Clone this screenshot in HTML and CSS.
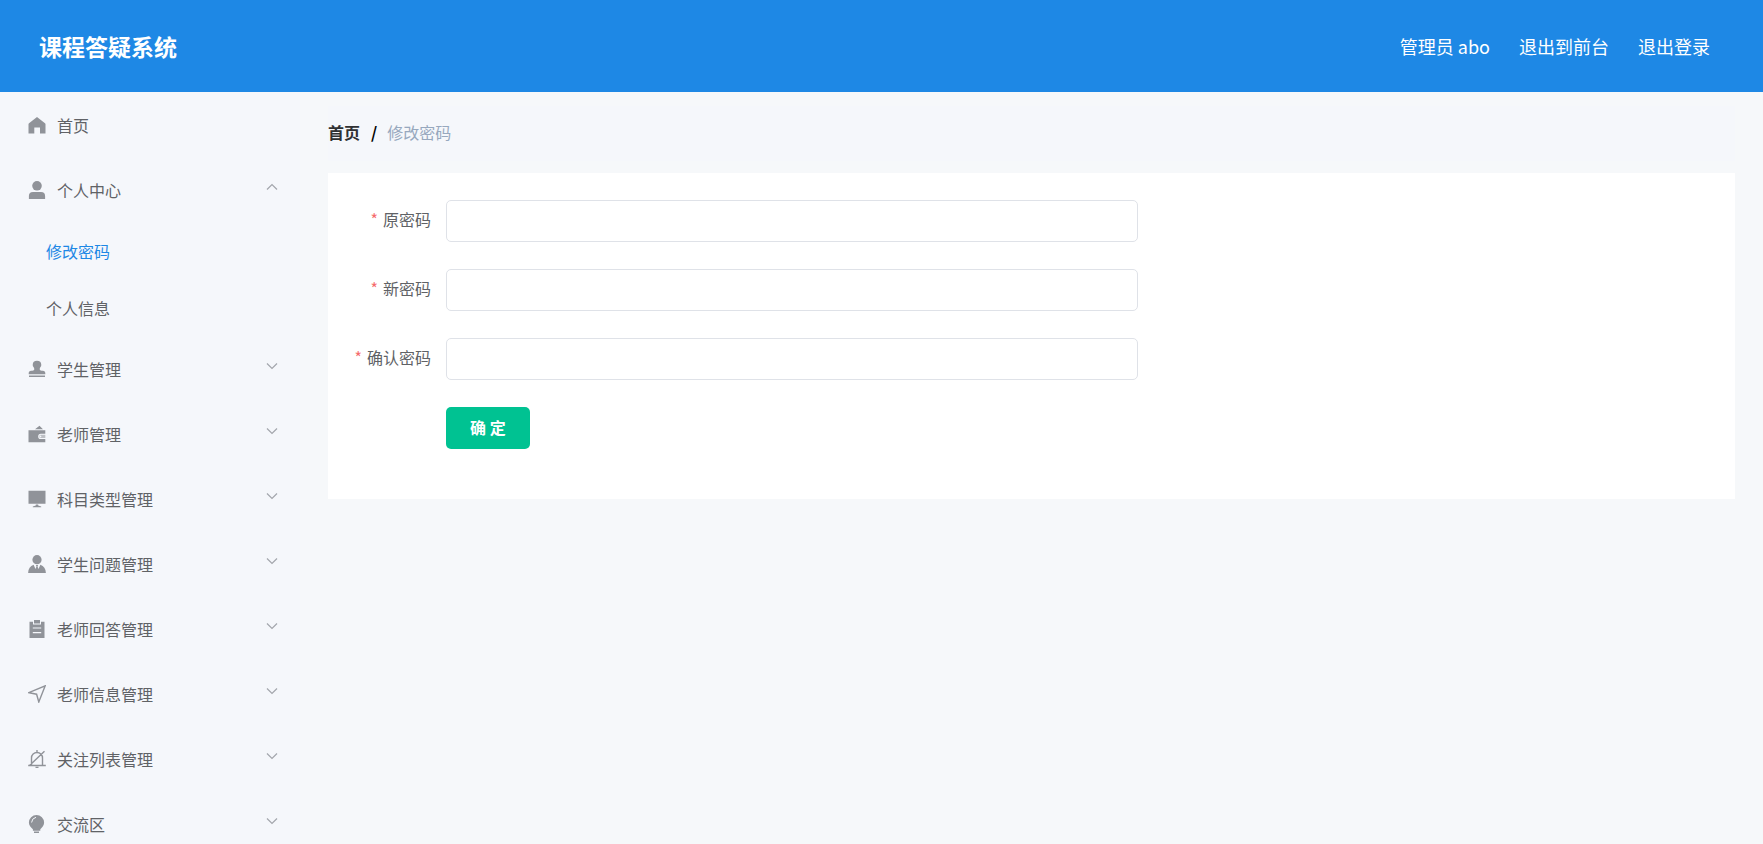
FILE: index.html
```html
<!DOCTYPE html>
<html lang="zh-CN">
<head>
    <meta charset="UTF-8">
    <meta name="viewport" content="width=device-width, initial-scale=1.0">
    <title>课程答疑系统</title>
    <link rel="stylesheet" href="styles.css">
</head>
<body>
    <!-- 下拉箭头 -->
    <svg class="symbols" aria-hidden="true">
        <symbol id="arrow" viewBox="0 0 12 12">
            <path d="M1 3.500 6 8.500 11 3.500" fill="none" stroke="currentColor" stroke-width="1.200"/>
        </symbol>
    </svg>

    <header class="header">
        <h1 class="title">课程答疑系统</h1>
        <nav class="header-nav">
            <span>管理员 abo</span>
            <a href="#">退出到前台</a>
            <a href="#">退出登录</a>
        </nav>
    </header>

    <div class="container">
        <aside class="sidebar">
            <a class="menu-item" href="#">
                <svg class="icon" viewBox="0 0 18 18"><path d="M9 1 17 7.200q.5.4.5 1V17.500H12v-6H6.300v6H.5V8.200q0-.6.500-1z"/></svg>
                <span>首页</span>
            </a>

            <details class="submenu" open>
                <summary class="menu-item">
                    <svg class="icon" viewBox="0 0 18 18"><circle cx="9" cy="4.800" r="4.800"/><path d="M.9 17.900v-3Q.9 10.900 5 10.900h8q4.100 0 4.100 4v3z"/></svg>
                    <span>个人中心</span>
                    <svg class="arrow"><use href="#arrow"/></svg>
                </summary>
                <a class="sub-item active" href="#">修改密码</a>
                <a class="sub-item" href="#">个人信息</a>
            </details>

            <details class="submenu">
                <summary class="menu-item">
                    <svg class="icon" viewBox="0 0 18 18"><path d="M9 .8a4.300 4.300 0 0 1 4.300 4.200c0 1.700-1.600 2.500-1.600 4 0 1.200.7 1.700 2 1.700h1.200q2.400 0 2.400 2.600v1H.7v-1q0-2.600 2.400-2.600h1.200c1.300 0 2-.5 2-1.700 0-1.500-1.600-2.300-1.600-4A4.300 4.300 0 0 1 9 .8zM1 15.500h16V17H1z"/></svg>
                    <span>学生管理</span>
                    <svg class="arrow"><use href="#arrow"/></svg>
                </summary>
            </details>

            <details class="submenu">
                <summary class="menu-item">
                    <svg class="icon" viewBox="0 0 18 18"><path d="M7 4.200 11.500.8 15 4.200zM.5 5.200H17.300v3.600h-4.500a2.600 2.600 0 0 0 0 5.200h4.500v3.300H.5z"/><path d="M12.800 9.800h4.500V13h-4.500a1.600 1.600 0 0 1 0-3.200zm0 .9a.8.800 0 1 0 0 1.500.8.800 0 0 0 0-1.500z" fill-rule="evenodd" opacity=".55"/></svg>
                    <span>老师管理</span>
                    <svg class="arrow"><use href="#arrow"/></svg>
                </summary>
            </details>

            <details class="submenu">
                <summary class="menu-item">
                    <svg class="icon" viewBox="0 0 18 18"><path d="M.5.8H17.500v13H.5zM7.800 14.500h2.400v1.100l3 1v.6H4.800v-.6l3-1z"/></svg>
                    <span>科目类型管理</span>
                    <svg class="arrow"><use href="#arrow"/></svg>
                </summary>
            </details>

            <details class="submenu">
                <summary class="menu-item">
                    <svg class="icon" viewBox="0 0 18 18"><circle cx="9" cy="4.700" r="4.600"/><path d="M5.600 9.800 7.500 14l1-2.500-.6-1.500h2.200l-.6 1.500 1 2.500 1.900-4.200q5.200 1.700 5.500 8.200H.1Q.4 11.500 5.600 9.800z"/></svg>
                    <span>学生问题管理</span>
                    <svg class="arrow"><use href="#arrow"/></svg>
                </summary>
            </details>

            <details class="submenu">
                <summary class="menu-item">
                    <svg class="icon" viewBox="0 0 18 18"><path d="M6 0h6v3.500H6z"/><path fill-rule="evenodd" d="M1.500 1.800H5v2.700h8V1.800h3.500V18h-15zM4.800 7.500v1.100h8.400V7.500zm0 4.600v1.100h8.400v-1.100z"/></svg>
                    <span>老师回答管理</span>
                    <svg class="arrow"><use href="#arrow"/></svg>
                </summary>
            </details>

            <details class="submenu">
                <summary class="menu-item">
                    <svg class="icon line" viewBox="0 0 18 18"><path d="M17.200.8 10.800 17 8.600 9.200.8 7.600z"/></svg>
                    <span>老师信息管理</span>
                    <svg class="arrow"><use href="#arrow"/></svg>
                </summary>
            </details>

            <details class="submenu">
                <summary class="menu-item">
                    <svg class="icon line" viewBox="0 0 18 18"><path d="M9 0v2M.2 15.500h17.600M3.500 15.500V8a5.500 5.500 0 0 1 11 0v7.500M7.500 17.400h3M16.500 1.200 1.500 15.500"/></svg>
                    <span>关注列表管理</span>
                    <svg class="arrow"><use href="#arrow"/></svg>
                </summary>
            </details>

            <details class="submenu">
                <summary class="menu-item">
                    <svg class="icon" viewBox="0 0 18 18"><path d="M8.500 0a7.600 7.600 0 0 1 7.600 7.600c0 3-1.800 4.700-3.800 6.700v1.400H4.900v-1.400C2.800 12.300.9 10.600.9 7.600A7.600 7.600 0 0 1 8.500 0zM6 16.400h5v1.600H6z"/><path class="shine" d="M3.600 7.500Q3.800 3.300 8 2.300"/></svg>
                    <span>交流区</span>
                    <svg class="arrow"><use href="#arrow"/></svg>
                </summary>
            </details>
        </aside>

        <main class="main">
            <nav class="breadcrumb">
                <a href="#">首页</a>
                <span class="separator">/</span>
                <span class="current">修改密码</span>
            </nav>

            <div class="panel">
                <form class="form" action="#">
                    <div class="form-item">
                        <label for="oldPassword">原密码</label>
                        <input type="password" id="oldPassword" required>
                    </div>
                    <div class="form-item">
                        <label for="newPassword">新密码</label>
                        <input type="password" id="newPassword" required>
                    </div>
                    <div class="form-item">
                        <label for="rePassword">确认密码</label>
                        <input type="password" id="rePassword" required>
                    </div>
                    <div class="form-btns">
                        <button type="submit">确 定</button>
                    </div>
                </form>
            </div>
        </main>
    </div>
</body>
</html>
```

FILE: styles.css
```css
*{
    padding: 0;
    margin: 0;
    box-sizing: border-box;
}
body{
    height: 100vh;
    display: flex;
    flex-direction: column;
    overflow: hidden;
    background-color: #f6f8fa;
    font-family: "Noto Sans CJK SC", sans-serif;
    font-size: 16px;
    line-height: 24px;
    color: #606266;
}
a{
    color: inherit;
    text-decoration: none;
}
.symbols{
    display: none;
}

/* 顶部 */
.header{
    flex-shrink: 0;
    height: 92px;
    padding: 0 53px 0 39px;
    display: flex;
    justify-content: space-between;
    align-items: center;
    background-color: #1e88e5;
    color: #fff;
}
.title{
    font-size: 23px;
    font-weight: 700;
}
.header-nav{
    display: flex;
    column-gap: 29px;
    font-size: 18px;
}

.container{
    flex: 1;
    min-height: 0;
    display: flex;
}

/* 左侧菜单 */
.sidebar{
    width: 300px;
    flex-shrink: 0;
    overflow-y: auto;
    scrollbar-width: none;
    background-color: #f5f7fb;
}
.menu-item{
    height: 65px;
    padding: 0 22px 0 23px;
    display: flex;
    align-items: center;
    list-style: none;
    cursor: pointer;
}
.icon{
    width: 18px;
    height: 18px;
    margin: 0 11px 0 5px;
    fill: #909399;
}
.icon.line{
    fill: none;
    stroke: #909399;
    stroke-width: 1.4;
}
.shine{
    fill: none;
    stroke: #f5f7fb;
}
.arrow{
    width: 12px;
    height: 12px;
    margin: 0 0 6px auto;
    color: #a3a6ac;
}
.submenu[open] .arrow{
    transform: rotate(180deg);
}
.sub-item{
    height: 57px;
    padding-left: 46px;
    display: flex;
    align-items: center;
}
.sub-item.active{
    color: #1e88e5;
}

/* 右侧内容 */
.main{
    flex: 1;
    padding: 14px 28px;
    overflow-y: auto;
}
.breadcrumb{
    height: 55px;
    padding-bottom: 3px;
    margin-bottom: 12px;
    display: flex;
    align-items: center;
    background-color: #f5f7fb;

    a,.separator{
        font-weight: 700;
        color: #303133;
    }
    .separator{
        margin: 0 10px 0 11px;
        color: #000;
    }
    .current{
        color: #97a8be;
    }
}
.panel{
    padding: 27px 27px 50px 0;
    background-color: #fff;
}
.form{
    max-width: 810px;
    display: flex;
    flex-direction: column;
    row-gap: 27px;
}
.form-item{
    display: flex;

    label{
        width: 118px;
        padding-right: 15px;
        line-height: 39px;
        text-align: right;
    }
    label::before{
        content: "*";
        margin-right: 5px;
        color: #f56c6c;
    }
    input{
        flex: 1;
        height: 42px;
        padding: 0 15px;
        border: solid 1px #dfe2e8;
        border-radius: 5px;
        outline: none;
        background-color: #fff;
        font: inherit;
    }
    input:focus{
        border-color: #1e88e5;
    }
}
.form-btns{
    padding-left: 118px;

    button{
        height: 42px;
        padding: 0 24px 3px;
        border: none;
        border-radius: 5px;
        background-color: #00c292;
        color: #fff;
        font: inherit;
        font-weight: 700;
        cursor: pointer;
    }
}
```
